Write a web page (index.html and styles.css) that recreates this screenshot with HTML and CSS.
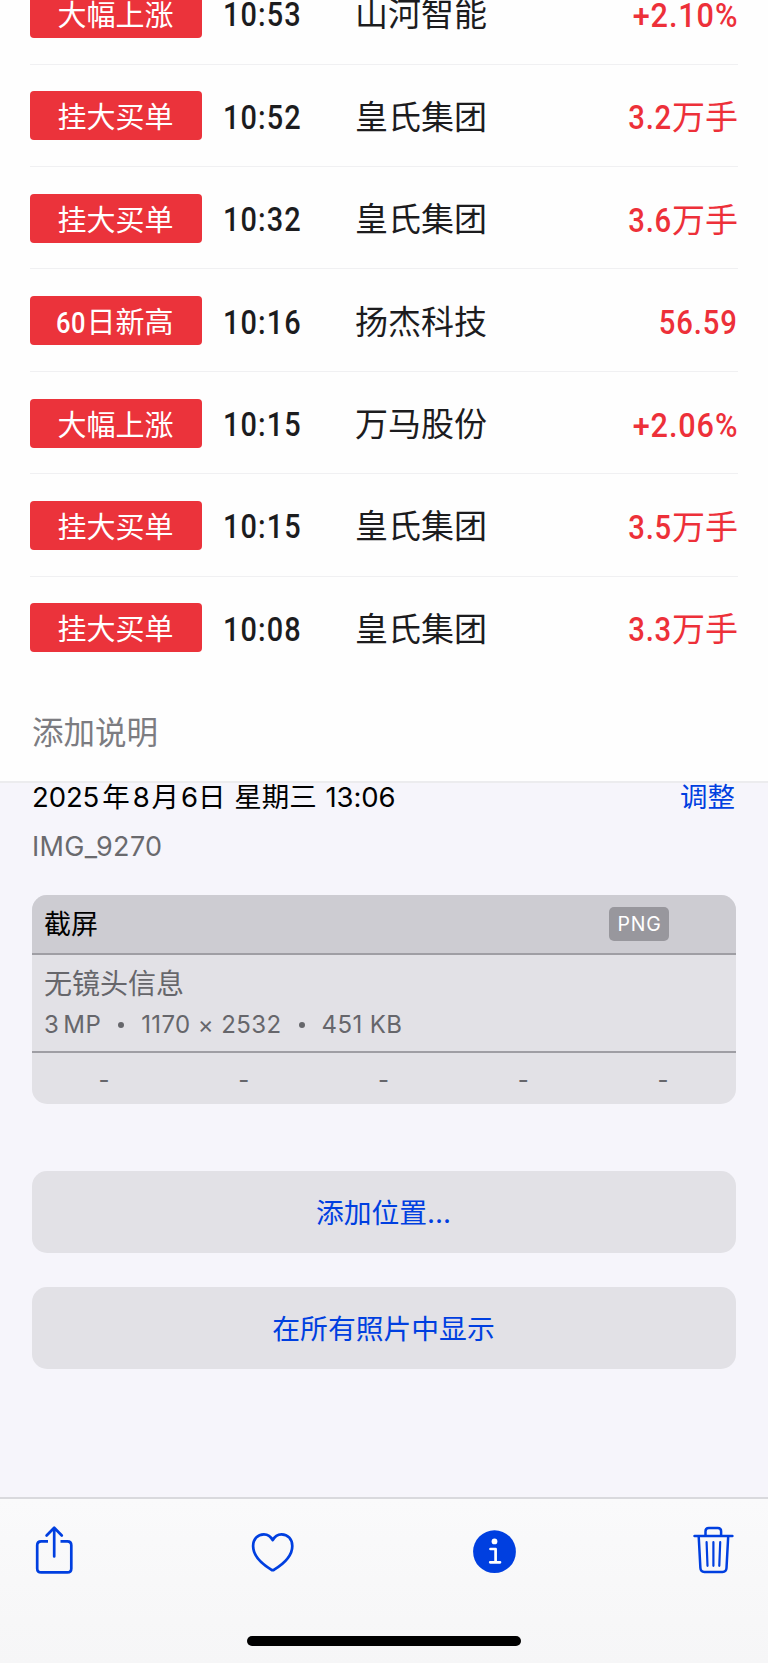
FILE: index.html
```html
<!DOCTYPE html>
<html lang="zh-CN">
<head>
  <meta charset="UTF-8">
  <title>IMG_9270</title>
  <meta name="viewport" content="width=device-width, initial-scale=1.0">
  <link rel="stylesheet" href="styles.css">
</head>
<body>
  <div class="screen">
    <!-- photo content -->
    <main class="photo">
      <ul class="alerts">
        <li class="alert"><span class="tag">大幅上涨</span><span class="time">10:53</span><span class="name">山河智能</span><span class="value"><b class="percent">+2.10%</b></span></li>
        <li class="alert"><span class="tag">挂大买单</span><span class="time">10:52</span><span class="name">皇氏集团</span><span class="value"><b>3.2</b>万手</span></li>
        <li class="alert"><span class="tag">挂大买单</span><span class="time">10:32</span><span class="name">皇氏集团</span><span class="value"><b>3.6</b>万手</span></li>
        <li class="alert"><span class="tag"><b>60</b>日新高</span><span class="time">10:16</span><span class="name">扬杰科技</span><span class="value"><b>56.59</b></span></li>
        <li class="alert"><span class="tag">大幅上涨</span><span class="time">10:15</span><span class="name">万马股份</span><span class="value"><b class="percent">+2.06%</b></span></li>
        <li class="alert"><span class="tag">挂大买单</span><span class="time">10:15</span><span class="name">皇氏集团</span><span class="value"><b>3.5</b>万手</span></li>
        <li class="alert"><span class="tag">挂大买单</span><span class="time">10:08</span><span class="name">皇氏集团</span><span class="value"><b>3.3</b>万手</span></li>
      </ul>
      <div class="caption">添加说明</div>
    </main>

    <!-- info panel -->
    <section class="info">
      <div class="date-row">
        <div class="date">2025<span class="year">年</span>8<span class="month">月</span>6<span class="day">日</span><span class="weekday">星期三</span>13:06</div>
        <a class="adjust">调整</a>
      </div>
      <div class="filename">IMG_9270</div>

      <div class="card">
        <div class="card-head">
          <span class="kind">截屏</span>
          <span class="format">PNG</span>
        </div>
        <div class="card-body">
          <div class="lens">无镜头信息</div>
          <div class="meta"><span class="mp">3 MP</span><i class="dot"></i><span>1170 × 2532</span><i class="dot"></i><span>451 KB</span></div>
        </div>
        <div class="card-foot">
          <span>-</span><span>-</span><span>-</span><span>-</span><span>-</span>
        </div>
      </div>

      <button class="action">添加位置...</button>
      <button class="action">在所有照片中显示</button>
    </section>

    <!-- bottom toolbar -->
    <footer class="toolbar">
      <div class="icons">
        <svg width="38" height="50" viewBox="0 0 38 50" fill="none" stroke="#003fe0" stroke-width="2.7" stroke-linecap="round" stroke-linejoin="round">
          <path stroke-linecap="butt" d="M13 16.300H6.200Q2.200 16.300 2.200 20.300V43.400Q2.200 47.400 6.200 47.400H32.300Q36.300 47.400 36.300 43.400V20.300Q36.300 16.300 32.300 16.300H25.500"/>
          <path d="M19.200 31.500V3M11.600 10.500L19.200 2.800L26.800 10.500"/>
        </svg>
        <svg width="44" height="50" viewBox="0 0 44 50" fill="none" stroke="#003fe0" stroke-width="2.700" stroke-linejoin="round">
          <path d="M22.700 15.200C20.700 11.200 17.600 9.300 13.900 9.300C7.400 9.300 3.100 14.500 3.100 21C3.100 30.500 10.400 38 21.200 44.600Q22.700 45.800 24.200 44.600C35 38 42.300 30.500 42.300 21C42.300 14.500 38 9.300 31.500 9.300C27.800 9.300 24.700 11.200 22.700 15.200Z"/>
        </svg>
        <svg width="44" height="50" viewBox="0 0 44 50">
          <circle cx="22.500" cy="26.700" r="21.400" fill="#003fe0"/>
          <circle cx="22.500" cy="16.400" r="2.900" fill="#fff"/>
          <path d="M18.500 24H23.600V37M18.200 37.300H28" fill="none" stroke="#fff" stroke-width="2.700" stroke-linecap="round" stroke-linejoin="round"/>
        </svg>
        <svg width="42" height="50" viewBox="0 0 42 50" fill="none" stroke="#003fe0" stroke-width="2.500" stroke-linecap="round" stroke-linejoin="round">
          <path d="M1.500 11H39.400M12.500 10.500V6.200Q12.500 2.900 15.800 2.900H24.800Q28.100 2.900 28.100 6.200V10.500"/>
          <path d="M5.700 11.500L7.400 43Q7.600 46.900 11.400 46.900H29.500Q33.300 46.900 33.500 43L35.200 11.500"/>
          <path stroke-width="2.200" d="M13.600 17.200L14.500 40.800M20.400 17.200V40.800M27.200 17.200L26.300 40.800"/>
        </svg>
      </div>
      <div class="home-indicator"></div>
    </footer>
  </div>
</body>
</html>
```

FILE: styles.css
```css
html, body {
  margin: 0;
  padding: 0;
  background-color: #fff;
  font-family: Inter, 'Noto Sans CJK SC', sans-serif;
}
*, *::before, *::after {
  box-sizing: border-box;
}
.screen {
  width: 768px;
  height: 1663px;
  overflow: hidden;
  display: flex;
  flex-direction: column;
}

/* photo */
.photo {
  height: 781px;
  flex: none;
  overflow: hidden;
  background-color: #fefefe;
  display: flex;
  flex-direction: column;
  justify-content: flex-end;
}
.alerts {
  list-style: none;
  margin: 0;
  padding: 0 30px;
  flex: none;
}
.alert {
  height: 102.4px;
  display: grid;
  grid-template-columns: 172px 109px 1fr auto;
  align-items: center;
  column-gap: 22px;
  padding-top: 1px;
  border-bottom: 1px solid #f0f0f2;
  font-family: Roboto, 'Noto Sans CJK SC', sans-serif;
  font-size: 33px;
  line-height: 48px;
  color: #1c1c1e;
}
.alert:last-child {
  border-bottom-color: transparent;
}
.tag {
  height: 49px;
  border-radius: 4px;
  background-color: #eb333b;
  color: #fff;
  font-size: 29px;
  line-height: 54px;
  text-align: center;
  text-indent: -1px;
}
.tag b {
  display: inline-block;
  margin-left: -5px;
  margin-right: 1px;
  font-weight: 500;
  letter-spacing: 0.5px;
  transform: scaleX(0.88);
  transform-origin: right;
}
.time,
.name,
.value {
  padding-top: 4px;
}
.time,
.value b {
  font-weight: 500;
  font-size: 34px;
}
.time {
  padding-top: 2px;
  margin-left: -1px;
  letter-spacing: 1.3px;
  transform: scaleX(0.85);
  transform-origin: left;
}
.value {
  color: #ed3039;
  text-align: right;
  white-space: nowrap;
}
.value b {
  display: inline-block;
  letter-spacing: 1px;
  transform: scaleX(0.86);
  transform-origin: right;
}
.value .percent {
  transform: scaleX(0.9);
}
.caption {
  flex: none;
  height: 102px;
  padding: 0 32px;
  font-size: 31.500px;
  line-height: 108px;
  color: #7c7c81;
}

/* info panel */
.info {
  height: 716px;
  flex: none;
  padding: 0 32px;
  border-top: 2px solid #ececee;
  background-color: #f6f5fb;
}
.date-row {
  display: flex;
  justify-content: space-between;
  height: 30px;
  font-size: 27.500px;
  line-height: 29px;
  color: #000;
}
.date {
  white-space: nowrap;
  letter-spacing: -0.1px;
}
.year {
  margin: 0 3px;
}
.month {
  margin: 0 2px;
}
.day {
  margin-right: 9px;
}
.weekday {
  margin-right: 9px;
}
.adjust {
  color: #003fe0;
  padding-right: 1px;
}
.filename {
  margin-top: 16px;
  height: 36px;
  font-size: 27px;
  line-height: 36px;
  letter-spacing: 0.3px;
  color: #6a6a6e;
}
.card {
  height: 209px;
  margin-top: 30px;
  margin-bottom: 67px;
  border-radius: 15px;
  overflow: hidden;
  background-color: #e2e1e6;
  color: #66666b;
}
.card-head {
  height: 60px;
  padding: 0 67px 0 12px;
  display: flex;
  justify-content: space-between;
  align-items: center;
  border-bottom: 2px solid #9f9ea4;
  background-color: #cdccd2;
  font-size: 27px;
  color: #000;
}
.kind {
  padding-bottom: 4px;
}
.format {
  width: 60px;
  height: 34px;
  border-radius: 5px;
  background-color: #98979d;
  color: #fff;
  font-size: 19.500px;
  line-height: 35px;
  text-align: center;
  text-indent: 1px;
  letter-spacing: 0.8px;
}
.card-body {
  height: 98px;
  padding: 8px 12px;
  border-bottom: 2px solid #9f9ea4;
}
.lens {
  font-size: 28px;
  line-height: 42px;
}
.meta {
  display: flex;
  align-items: center;
  font-size: 24px;
  line-height: 39px;
  letter-spacing: 0.4px;
}
.mp {
  word-spacing: -3px;
}
.dot {
  width: 6px;
  height: 6px;
  margin: 0 17px;
  border-radius: 50%;
  background-color: #66666b;
}
.card-foot {
  height: 51px;
  padding: 0 3px 0 2px;
  display: grid;
  grid-template-columns: repeat(5, 1fr);
  text-align: center;
  font-size: 24px;
  line-height: 53px;
}
.action {
  display: block;
  width: 100%;
  height: 82px;
  margin: 0 0 34px;
  padding: 0 1px 2px 0;
  border: 0;
  border-radius: 15px;
  background-color: #e2e1e6;
  color: #003fe0;
  font-family: inherit;
  font-size: 27.800px;
}

/* toolbar */
.toolbar {
  flex: 1;
  border-top: 2px solid #d9d9dd;
  background: linear-gradient(#fafafb, #f6f6f7);
}
.icons {
  height: 137px;
  padding: 26px 33px 0 35px;
  display: flex;
  justify-content: space-between;
}
.home-indicator {
  width: 274px;
  height: 10px;
  margin: 0 auto;
  border-radius: 5px;
  background-color: #000;
}
```
